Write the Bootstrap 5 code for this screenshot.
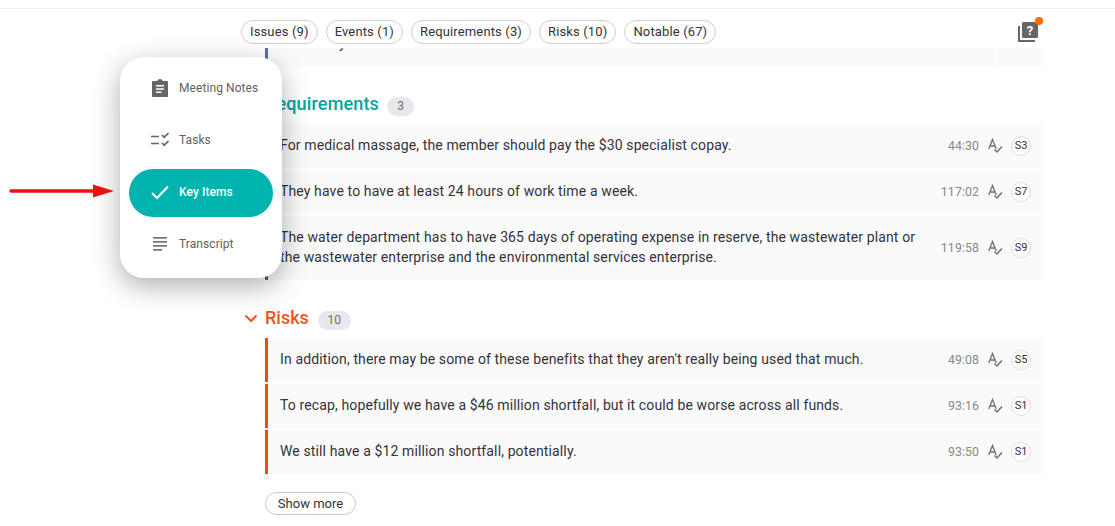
<!DOCTYPE html>
<html lang="en">
<head>
<meta charset="utf-8">
<title>Key Items</title>
<link href="https://cdn.jsdelivr.net/npm/bootstrap@5.3.0/dist/css/bootstrap.min.css" rel="stylesheet">
<style>
html,body{height:526px;overflow:hidden;background:#fff;}
body{font-family:Roboto,"Liberation Sans",sans-serif;font-size:14px;color:#33333b;position:relative;}
.top-rule{height:9px;border-bottom:1px solid #f0f0f0;}
.main-col{margin-left:241px;width:802px;}
.tab-strip{height:39px;padding-top:11px;}
.tab-pill{height:24px;padding:0 8px;font-size:13px;letter-spacing:.14px;line-height:22px;border:1px solid #cfcfcf;border-radius:12px;background:#fff;color:#333;white-space:nowrap;}
.help-wrap{position:relative;width:22px;height:22px;margin-right:3px;margin-top:2px;}
.help-dot{position:absolute;top:-5px;right:-3px;width:8px;height:8px;border-radius:50%;background:#ff6d00;}
.entries{margin-left:24px;}
.entry{background:#fafafa;margin-bottom:2px;min-height:44px;border-left:3px solid transparent;padding-left:12px;line-height:20px;}
.entry.teal{border-left-color:#00897b;}
.entry.red{border-left-color:#f44a0c;}
.entry-cut{height:18px;min-height:0;margin:0;border-left-color:#5c6bc0;overflow:hidden;position:relative;}
.entry-cut .cut-y{position:relative;top:-15px;margin-left:59px;}
.cut-split{position:absolute;right:46px;top:0;bottom:0;width:2px;background:#fff;}
.entry-text{flex:1 1 auto;padding:11px 0 13px;min-width:0;letter-spacing:.125px;}
.entry-meta{width:116px;flex:0 0 auto;padding-right:12px;color:#888;font-size:12.3px;}
.time-lab{margin-left:auto;letter-spacing:.1px;}
.spell-ic{margin:0 8px 0 9px;flex:0 0 auto;}
.spk{width:20px;height:20px;border:1px solid #ddd;border-radius:50%;background:#fff;font-size:11px;line-height:18px;text-align:center;color:#333;flex:0 0 auto;}
.sec-head{height:20px;font-size:18px;font-weight:500;line-height:20px;position:relative;}
.sec-req{color:#00a69c;margin-top:28px;margin-bottom:10px;letter-spacing:.15px;}
.sec-risk{color:#f4511e;margin-top:28px;margin-bottom:10px;}
.sec-chev{position:absolute;left:-21px;top:6px;}
.count-chip{display:inline-block;min-width:27px;height:19px;padding:0 7px;margin-left:8px;border-radius:10px;background:#e8e8ec;color:#6b6f76;font-size:12px;font-weight:400;line-height:19px;text-align:center;letter-spacing:0;}
.sec-risk .count-chip{margin-left:9px;width:33px;}
.more-btn{margin-top:16px;height:23px;width:91px;padding:0;font-size:13px;line-height:21px;border:1px solid #c8c8c8;border-radius:12px;background:#fff;color:#333;}
.side-menu{position:absolute;left:120px;top:57px;width:162px;height:221px;background:#fff;border-radius:24px;box-shadow:0 8px 28px rgba(0,0,0,.32);padding:7px 9px;}
.side-item{height:48px;margin-bottom:4px;padding-left:21px;border-radius:24px;font-size:12px;letter-spacing:.08px;color:#616161;display:flex;align-items:center;}
.side-item svg{flex:0 0 auto;margin-right:9px;}
.side-item.on{background:#00b3ae;color:#fff;font-weight:500;margin-top:5px;margin-bottom:3px;padding-bottom:2px;}
.pointer{position:absolute;left:9px;top:183px;}
</style>
</head>
<body>
<div class="top-rule"></div>
<div class="main-col">
  <div class="tab-strip d-flex gap-2">
    <span class="tab-pill">Issues (9)</span>
    <span class="tab-pill">Events (1)</span>
    <span class="tab-pill">Requirements (3)</span>
    <span class="tab-pill">Risks (10)</span>
    <span class="tab-pill">Notable (67)</span>
    <span class="help-wrap ms-auto">
      <svg width="22" height="22" viewBox="0 0 22 22"><path d="M1 4v15h16" fill="none" stroke="#666" stroke-width="2"/><rect x="4" y="0" width="16" height="16" rx="1.500" fill="#666"/><text x="12" y="13" font-family="Roboto,sans-serif" font-size="13" font-weight="700" fill="#fff" text-anchor="middle">?</text></svg>
      <span class="help-dot"></span>
    </span>
  </div>
  <div class="entries">
    <div class="entry entry-cut"><div class="cut-y">y</div><span class="cut-split"></span></div>

    <div class="sec-head sec-req">Requirements<span class="count-chip">3</span></div>
    <div class="entry teal d-flex align-items-center"><div class="entry-text">For medical massage, the member should pay the $30 specialist copay.</div><div class="entry-meta d-flex align-items-center"><span class="time-lab">44:30</span><svg class="spell-ic" width="15" height="16" viewBox="0 0 15 16"><use href="#sp"/></svg><span class="spk">S3</span></div></div>
    <div class="entry teal d-flex align-items-center"><div class="entry-text">They have to have at least 24 hours of work time a week.</div><div class="entry-meta d-flex align-items-center"><span class="time-lab">117:02</span><svg class="spell-ic" width="15" height="16" viewBox="0 0 15 16"><use href="#sp"/></svg><span class="spk">S7</span></div></div>
    <div class="entry teal d-flex align-items-center"><div class="entry-text">The water department has to have 365 days of operating expense in reserve, the wastewater plant or the wastewater enterprise and the environmental services enterprise.</div><div class="entry-meta d-flex align-items-center"><span class="time-lab">119:58</span><svg class="spell-ic" width="15" height="16" viewBox="0 0 15 16"><use href="#sp"/></svg><span class="spk">S9</span></div></div>

    <div class="sec-head sec-risk">
      <svg class="sec-chev" width="14" height="9" viewBox="0 0 14 9"><path d="M1.500 1.500 7 7l5.500-5.500" fill="none" stroke="#f4511e" stroke-width="2"/></svg>
      Risks<span class="count-chip">10</span></div>
    <div class="entry red d-flex align-items-center"><div class="entry-text">In addition, there may be some of these benefits that they aren't really being used that much.</div><div class="entry-meta d-flex align-items-center"><span class="time-lab">49:08</span><svg class="spell-ic" width="15" height="16" viewBox="0 0 15 16"><use href="#sp"/></svg><span class="spk">S5</span></div></div>
    <div class="entry red d-flex align-items-center"><div class="entry-text">To recap, hopefully we have a $46 million shortfall, but it could be worse across all funds.</div><div class="entry-meta d-flex align-items-center"><span class="time-lab">93:16</span><svg class="spell-ic" width="15" height="16" viewBox="0 0 15 16"><use href="#sp"/></svg><span class="spk">S1</span></div></div>
    <div class="entry red d-flex align-items-center"><div class="entry-text">We still have a $12 million shortfall, potentially.</div><div class="entry-meta d-flex align-items-center"><span class="time-lab">93:50</span><svg class="spell-ic" width="15" height="16" viewBox="0 0 15 16"><use href="#sp"/></svg><span class="spk">S1</span></div></div>
    <button type="button" class="btn more-btn">Show more</button>
  </div>
</div>

<nav class="side-menu">
  <div class="side-item">
    <svg width="20" height="20" viewBox="0 0 20 20"><path fill="#666" d="M3 3h4.200C7.600 1.800 8.700 1 10 1s2.400.8 2.800 2H17c.6 0 1 .4 1 1v14c0 .6-.4 1-1 1H3c-.6 0-1-.4-1-1V4c0-.6.4-1 1-1z"/><path fill="#fff" d="M6 7h8v1.600H6zM6 10.200h8v1.600H6zM6 13.400h5.500V15H6z"/></svg>
    Meeting Notes
  </div>
  <div class="side-item">
    <svg width="20" height="20" viewBox="0 0 20 20" fill="none" stroke="#666" stroke-width="1.700"><path d="M1 6.500h8M1 13.500h8"/><path d="M12 5l2.200 2.200L18.500 3M12 13l2.200 2.200L18.500 11"/></svg>
    Tasks
  </div>
  <div class="side-item on">
    <svg width="20" height="20" viewBox="0 0 20 20" fill="none" stroke="#fff" stroke-width="2"><path d="M2 11l5 5L18 4.500"/></svg>
    Key Items
  </div>
  <div class="side-item">
    <svg width="20" height="20" viewBox="0 0 20 20" fill="#777"><path d="M3 3h14v1.700H3zM3 7h14v1.700H3zM3 11h14v1.700H3zM3 15h9v1.700H3z"/></svg>
    Transcript
  </div>
</nav>

<svg class="pointer" width="106" height="16" viewBox="0 0 106 16"><path d="M2 8h84" stroke="#f01010" stroke-width="3.500" stroke-linecap="round"/><path d="M84 1.500 105 8 84 14.500z" fill="#f01010"/></svg>

<svg width="0" height="0" class="d-block position-absolute"><defs><g id="sp" fill="none" stroke="#707070" stroke-width="1.300"><path d="M.8 11 4.500 1.500 8.200 11M2 8h5"/><path d="M6.500 11.500 9 14l5-5.500" stroke-width="1.500"/></g></defs></svg>
</body>
</html>
